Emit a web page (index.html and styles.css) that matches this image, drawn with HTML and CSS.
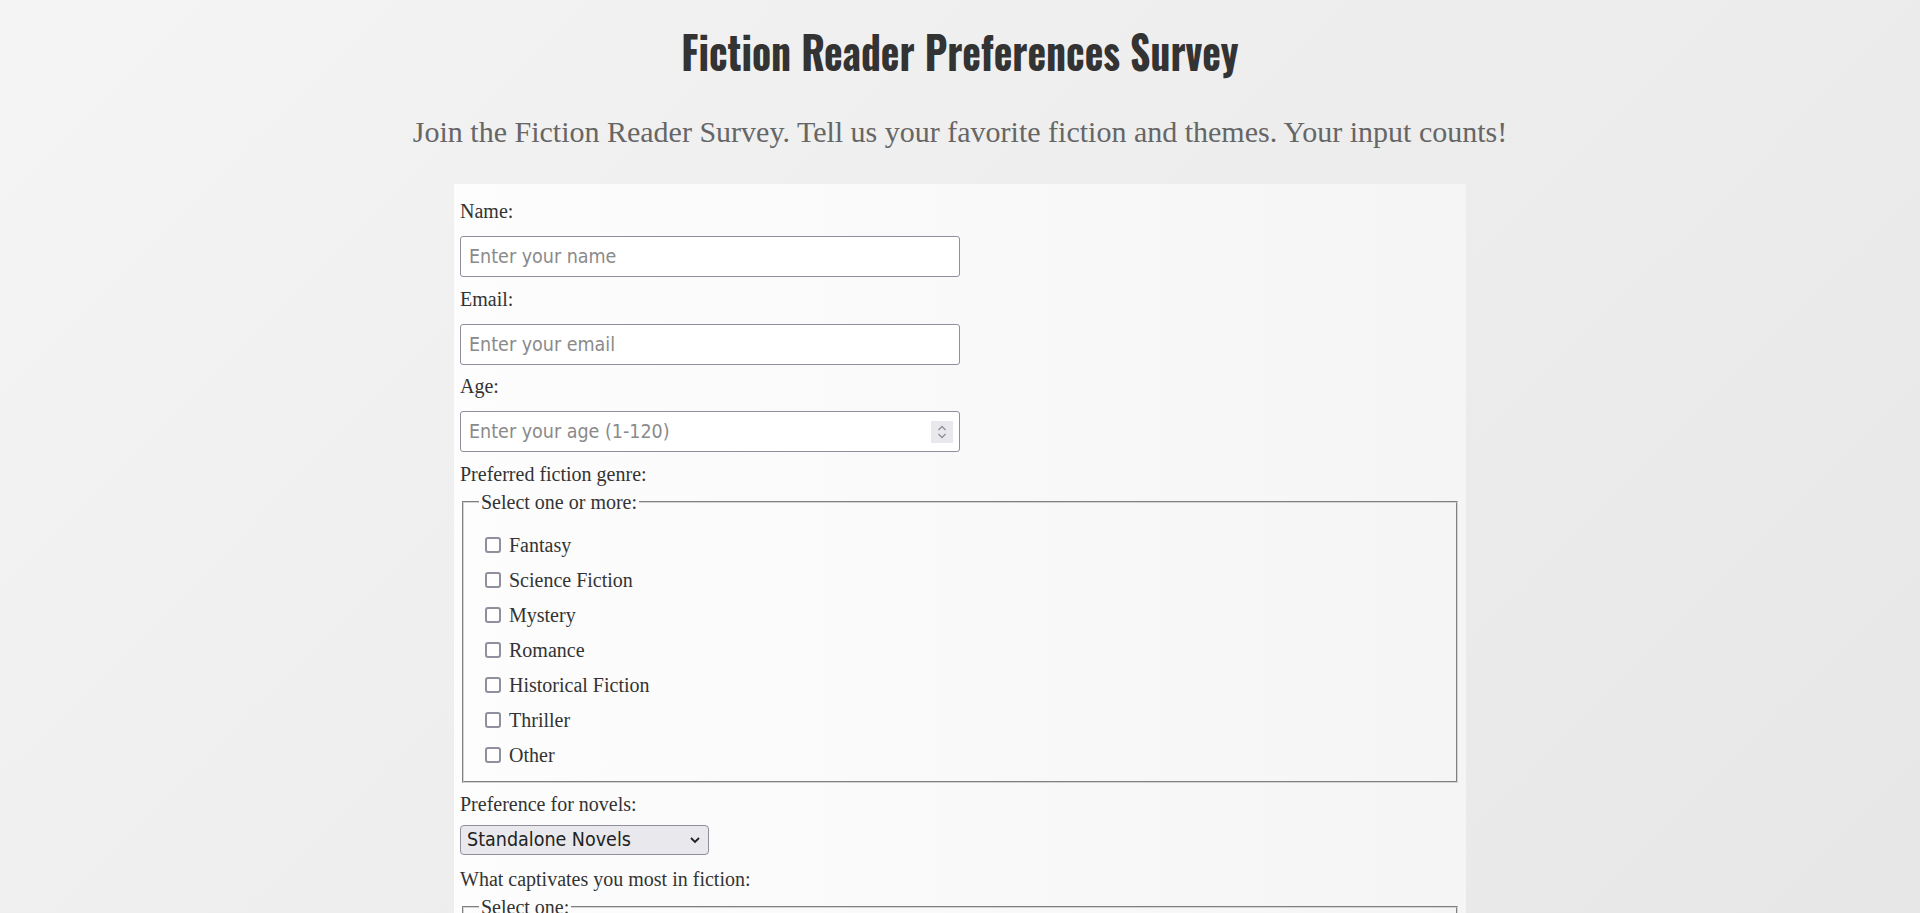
FILE: index.html
```html
<!DOCTYPE html>
<html lang="en">
<head>
<meta charset="utf-8">
<title>Fiction Reader Preferences Survey</title>
<link rel="stylesheet" href="styles.css">
</head>
<body>
<header class="intro">
  <h1 class="title"><span class="title-text">Fiction Reader Preferences Survey</span></h1>
  <p class="subtitle">Join the Fiction Reader Survey. Tell us your favorite fiction and themes. Your input counts!</p>
</header>
<form class="survey">
  <label class="field-label" for="name">Name:</label>
  <input class="text-input" id="name" type="text" placeholder="Enter your name">

  <label class="field-label" for="email">Email:</label>
  <input class="text-input" id="email" type="email" placeholder="Enter your email">

  <label class="field-label" for="age">Age:</label>
  <div class="number-field">
    <input class="number-input" id="age" type="text" placeholder="Enter your age (1-120)">
    <span class="spinner">
      <svg width="22" height="22" viewBox="0 0 22 22"><polyline points="7.5,9 11,5.5 14.5,9" fill="none" stroke="#8f8f9d" stroke-width="1.4"/><polyline points="7.5,13 11,16.5 14.5,13" fill="none" stroke="#8f8f9d" stroke-width="1.4"/></svg>
    </span>
  </div>

  <label class="field-label">Preferred fiction genre:</label>
  <fieldset class="group">
    <legend class="group-legend">Select one or more:</legend>
    <label class="option"><input class="check" type="checkbox">Fantasy</label>
    <label class="option"><input class="check" type="checkbox">Science Fiction</label>
    <label class="option"><input class="check" type="checkbox">Mystery</label>
    <label class="option"><input class="check" type="checkbox">Romance</label>
    <label class="option"><input class="check" type="checkbox">Historical Fiction</label>
    <label class="option"><input class="check" type="checkbox">Thriller</label>
    <label class="option"><input class="check" type="checkbox">Other</label>
  </fieldset>

  <label class="field-label" for="novels">Preference for novels:</label>
  <div class="select-wrap">
    <select class="select" id="novels">
      <option>Standalone Novels</option>
      <option>Series</option>
      <option>Both</option>
    </select>
    <svg class="select-arrow" width="12" height="8" viewBox="0 0 12 8"><polyline points="2,2 6,6 10,2" fill="none" stroke="#222" stroke-width="1.8"/></svg>
  </div>

  <label class="field-label">What captivates you most in fiction:</label>
  <fieldset class="group">
    <legend class="group-legend">Select one:</legend>
    <label class="option"><input class="radio" type="radio" name="cap">Plot</label>
    <label class="option"><input class="radio" type="radio" name="cap">Characters</label>
    <label class="option"><input class="radio" type="radio" name="cap">World-building</label>
    <label class="option"><input class="radio" type="radio" name="cap">Writing style</label>
  </fieldset>
</form>
</body>
</html>
```
FILE: styles.css
```css
html {
  min-height: 100%;
  background: linear-gradient(135deg, #f4f4f4 0%, #e7e7e7 100%) fixed;
}
body {
  margin: 0;
  color: #333;
  font-family: "Liberation Serif", "Times New Roman", serif;
}
.intro {
  text-align: center;
}
.title {
  margin: 0;
  padding-top: 22px;
  height: 56px;
  line-height: 56px;
  font-family: "Oswald", "Liberation Sans Narrow", "DejaVu Sans Condensed", sans-serif;
  font-weight: 700;
  font-size: 46px;
  color: #333;
}
.title-text {
  display: inline-block;
  transform: scaleX(0.86);
}
.subtitle {
  margin: 36px 0 0;
  line-height: 36px;
  font-size: 30px;
  color: #666;
}
.survey {
  width: 1000px;
  margin: 34px auto 0;
  padding: 16px 6px 40px;
  background: linear-gradient(to right, #fdfdfd, #f5f5f5);
}
.field-label {
  display: block;
  font-size: 20px;
  line-height: 23px;
}
.text-input,
.number-field {
  box-sizing: border-box;
  display: flex;
  width: 500px;
  height: 41px;
  margin: 13px 0 10.5px;
  border: 1px solid #8f8f9d;
  border-radius: 3px;
  background: #fff;
}
.text-input {
  padding: 0 8px;
  font-family: "DejaVu Sans Condensed", "DejaVu Sans", sans-serif;
  font-size: 19.5px;
  color: #222;
}
.number-field {
  align-items: center;
  padding: 0 6px 0 8px;
}
.number-input {
  flex: 1;
  min-width: 0;
  border: 0;
  padding: 0;
  outline: none;
  background: transparent;
  font-family: "DejaVu Sans Condensed", "DejaVu Sans", sans-serif;
  font-size: 19.5px;
  color: #222;
}
.text-input::placeholder,
.number-input::placeholder {
  color: #8a8a8a;
}
.spinner {
  display: flex;
  width: 22px;
  height: 22px;
  background: #e9e9ed;
}
.group {
  margin: 5px 2px 10px;
  padding: 14px 15px 8px;
  border: 2px groove #d4d4d4;
  font-size: 20px;
}
.group-legend {
  padding: 0 2px;
  line-height: 23px;
}
.option {
  display: flex;
  align-items: center;
  height: 35px;
  padding-left: 6px;
  line-height: 23px;
}
.check,
.radio {
  appearance: none;
  box-sizing: border-box;
  width: 16px;
  height: 16px;
  margin: 0 8px 0 0;
  border: 2px solid #8f8f9d;
  border-radius: 3px;
  background: #fff;
}
.radio {
  border-radius: 50%;
}
.select-wrap {
  position: relative;
  display: inline-block;
  margin: 9px 0 13px;
}
.select {
  appearance: none;
  box-sizing: border-box;
  width: 249px;
  height: 30px;
  padding: 0 6px;
  border: 1px solid #8f8f9d;
  border-radius: 4px;
  background: #e9e9ed;
  font-family: "DejaVu Sans Condensed", "DejaVu Sans", sans-serif;
  font-size: 19.5px;
  color: #222;
}
.select-arrow {
  position: absolute;
  right: 8px;
  top: 11px;
  pointer-events: none;
}
```
